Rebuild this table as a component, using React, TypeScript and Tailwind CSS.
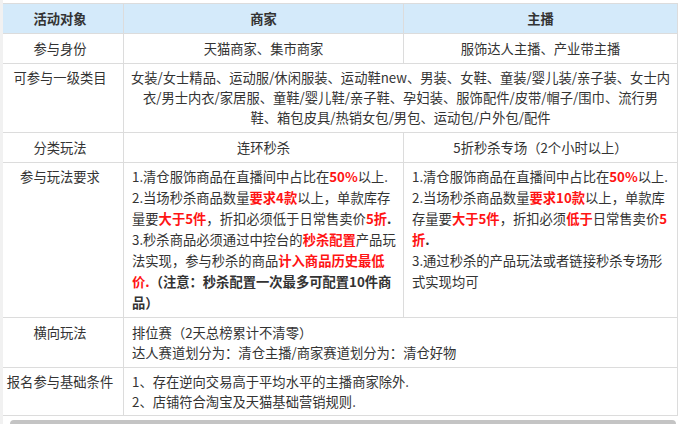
import React from "react";

function R({ children }: { children: React.ReactNode }) {
  return <span className="font-bold text-[#ff1414]">{children}</span>;
}

function B({ children }: { children: React.ReactNode }) {
  return <span className="font-bold">{children}</span>;
}

// one div per line so every row keeps the same line pitch
function Lines({ lines, tall }: { lines: React.ReactNode[]; tall?: boolean }) {
  return (
    <>
      {lines.map((l, i) => (
        <div key={i} className={`whitespace-nowrap ${tall ? "h-[21px]" : "h-5"}`}>
          {l}
        </div>
      ))}
    </>
  );
}

const td = "border border-[#dcdcdc] leading-[20px] align-top";
const one = `${td} pt-[5px] pb-1 text-center`;

export default function App() {
  return (
    <div
      className="relative w-[684px] h-[424px] overflow-hidden bg-white text-[13.3px] text-[#333]"
      style={{ fontFamily: '"Noto Sans CJK SC", sans-serif' }}
    >
      <div className="absolute left-0 top-0 bottom-0 w-[3px] bg-[#f1f1f1] z-10" />
      <table className="table-fixed border-collapse -ml-1 mt-[3px] w-[681px]">
        <colgroup>
          <col className="w-[127px]" />
          <col className="w-[280px]" />
          <col className="w-[274px]" />
        </colgroup>
        <thead>
          <tr className="bg-[#d4eafa] font-bold">
            <th className={one}>
              <Lines lines={["活动对象"]} />
            </th>
            <th className={one}>
              <Lines lines={["商家"]} />
            </th>
            <th className={one}>
              <Lines lines={["主播"]} />
            </th>
          </tr>
        </thead>
        <tbody>
          <tr>
            <td className={one}>
              <Lines lines={["参与身份"]} />
            </td>
            <td className={one}>
              <Lines lines={["天猫商家、集市商家"]} />
            </td>
            <td className={one}>
              <Lines lines={["服饰达人主播、产业带主播"]} />
            </td>
          </tr>
          <tr>
            <td className={`${td} py-1 text-center`}>
              <Lines lines={["可参与一级类目"]} />
            </td>
            <td colSpan={2} className={`${td} py-1 text-center px-1`}>
              <Lines
                lines={[
                  "女装/女士精品、运动服/休闲服装、运动鞋new、男装、女鞋、童装/婴儿装/亲子装、女士内",
                  "衣/男士内衣/家居服、童鞋/婴儿鞋/亲子鞋、孕妇装、服饰配件/皮带/帽子/围巾、流行男",
                  "鞋、箱包皮具/热销女包/男包、运动包/户外包/配件",
                ]}
              />
            </td>
          </tr>
          <tr>
            <td className={one}>
              <Lines lines={["分类玩法"]} />
            </td>
            <td className={one}>
              <Lines lines={["连环秒杀"]} />
            </td>
            <td className={one}>
              <Lines lines={["5折秒杀专场（2个小时以上）"]} />
            </td>
          </tr>
          <tr>
            <td className={`${td} pt-1 pb-[3px] text-center`}>
              <Lines tall lines={["参与玩法要求"]} />
            </td>
            <td className={`${td} pt-1 pb-[3px] pl-2 pr-1`}>
              <Lines
                tall
                lines={[
                  <>1.清仓服饰商品在直播间中占比在<R>50%</R>以上.</>,
                  <>2.当场秒杀商品数量<R>要求4款</R>以上，单款库存</>,
                  <>量要<R>大于5件</R>，折扣必须低于日常售卖价<R>5折</R><B>.</B></>,
                  <>3.秒杀商品必须通过中控台的<R>秒杀配置</R>产品玩</>,
                  <>法实现，参与秒杀的商品<R>计入商品历史最低</R></>,
                  <><R>价.</R><B>（注意：秒杀配置一次最多可配置10件商</B></>,
                  <B>品）</B>,
                ]}
              />
            </td>
            <td className={`${td} pt-1 pb-[3px] pl-2 pr-1`}>
              <Lines
                tall
                lines={[
                  <>1.清仓服饰商品在直播间中占比在<R>50%</R>以上.</>,
                  <>2.当场秒杀商品数量<R>要求10款</R>以上，单款库</>,
                  <>存量要<R>大于5件</R>，折扣必须<R>低于</R>日常售卖价<R>5</R></>,
                  <><R>折</R><B>.</B></>,
                  "3.通过秒杀的产品玩法或者链接秒杀专场形",
                  "式实现均可",
                ]}
              />
            </td>
          </tr>
          <tr>
            <td className={`${td} pt-[5px] pb-1 text-center`}>
              <Lines lines={["横向玩法"]} />
            </td>
            <td colSpan={2} className={`${td} pt-[5px] pb-1 px-2`}>
              <Lines
                lines={[
                  "排位赛（2天总榜累计不清零）",
                  "达人赛道划分为：清仓主播/商家赛道划分为：清仓好物",
                ]}
              />
            </td>
          </tr>
          <tr>
            <td className={`${td} pt-1 pb-[3px] text-center px-0`}>
              <Lines lines={["报名参与基础条件"]} />
            </td>
            <td colSpan={2} className={`${td} pt-1 pb-[3px] px-2`}>
              <Lines
                lines={[
                  "1、存在逆向交易高于平均水平的主播商家除外.",
                  "2、店铺符合淘宝及天猫基础营销规则.",
                ]}
              />
            </td>
          </tr>
        </tbody>
      </table>
      <div className="mt-1 ml-[10px] w-[666px] h-2 rounded-full bg-[#c4c4c4]" />
    </div>
  );
}
